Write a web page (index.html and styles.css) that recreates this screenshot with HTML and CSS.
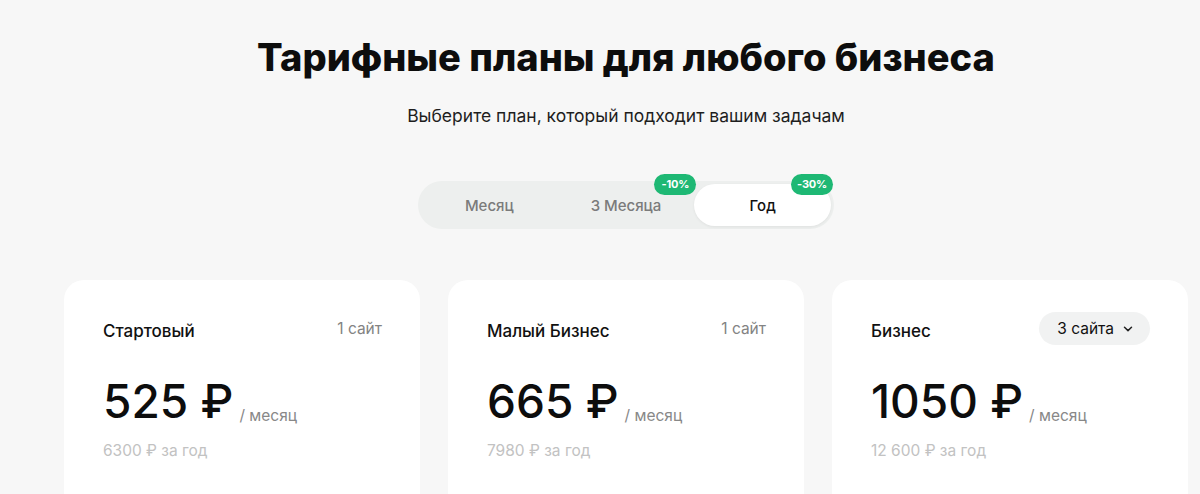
FILE: index.html
```html
<!DOCTYPE html>
<html lang="ru">
<head>
<meta charset="utf-8">
<title>Тарифные планы</title>
<link rel="stylesheet" href="styles.css">
</head>
<body>
<div class="page">
  <h1 class="title">Тарифные планы для любого бизнеса</h1>
  <p class="subtitle">Выберите план, который подходит вашим задачам</p>

  <div class="toggle">
    <div class="seg">Месяц</div>
    <div class="seg">3 Месяца<span class="badge">-10%</span></div>
    <div class="seg seg-active">Год<span class="badge">-30%</span></div>
  </div>

  <div class="cards">
    <div class="card">
      <div class="card-head">
        <span class="plan">Стартовый</span>
        <span class="sites">1 сайт</span>
      </div>
      <div class="price-row">
        <span class="price">525 ₽</span>
        <span class="per">/ месяц</span>
      </div>
      <div class="year">6300 ₽ за год</div>
    </div>
    <div class="card">
      <div class="card-head">
        <span class="plan">Малый Бизнес</span>
        <span class="sites">1 сайт</span>
      </div>
      <div class="price-row">
        <span class="price">665 ₽</span>
        <span class="per">/ месяц</span>
      </div>
      <div class="year">7980 ₽ за год</div>
    </div>
    <div class="card">
      <div class="card-head">
        <span class="plan">Бизнес</span>
        <span class="select">3 сайта
          <svg class="chev" width="10" height="6" viewBox="0 0 10 6"><path d="M1.5 1.2 L5 4.6 L8.5 1.2" fill="none" stroke="#222" stroke-width="1.5" stroke-linecap="round" stroke-linejoin="round"/></svg>
        </span>
      </div>
      <div class="price-row">
        <span class="price">1050 ₽</span>
        <span class="per">/ месяц</span>
      </div>
      <div class="year">12 600 ₽ за год</div>
    </div>
  </div>
</div>
</body>
</html>
```

FILE: styles.css
```css
* { box-sizing: border-box; }
html, body { margin: 0; padding: 0; }
body {
  background: #f7f7f7;
  font-family: "Inter", "Noto Sans", sans-serif;
  color: #111;
  overflow: hidden;
  height: 494px;
}
.page {
  width: 1252px;
  padding-top: 34px;
  display: flex;
  flex-direction: column;
  align-items: center;
}
.title {
  margin: 0;
  font-size: 38px;
  line-height: 46px;
  font-weight: 800;
  color: #0d0d0d;
  letter-spacing: 0;
}
.subtitle {
  margin: 24px 0 0;
  font-size: 17.5px;
  line-height: 24px;
  color: #1e1e1e;
}
.toggle {
  margin-top: 53px;
  width: 416px;
  height: 48px;
  padding: 3px;
  border-radius: 24px;
  background: #edefee;
  display: flex;
}
.seg {
  position: relative;
  flex: 1;
  display: flex;
  align-items: center;
  justify-content: center;
  border-radius: 21px;
  font-size: 15px;
  font-weight: 500;
  color: #7b7b7b;
}
.seg-active {
  background: #fff;
  color: #111;
  box-shadow: 0 1px 3px rgba(0,0,0,0.06);
}
.badge {
  position: absolute;
  top: -10px;
  right: -2px;
  width: 42px;
  height: 21px;
  border-radius: 11px;
  background: #1eb874;
  color: #fff;
  font-size: 11px;
  font-weight: 700;
  line-height: 21px;
  text-align: center;
  letter-spacing: -0.2px;
}
.cards {
  margin-top: 51px;
  width: 1124px;
  display: grid;
  grid-template-columns: repeat(3, 1fr);
  gap: 28px;
}
.card {
  background: #fff;
  border-radius: 20px;
  height: 260px;
  padding: 33px 38px 0 39px;
}
.card-head {
  height: 32px;
  display: flex;
  align-items: center;
  justify-content: space-between;
}
.plan {
  font-size: 17px;
  font-weight: 500;
  color: #111;
  padding-top: 4px;
}
.sites {
  font-size: 15.5px;
  color: #838383;
  padding-bottom: 2px;
}
.select {
  height: 33px;
  padding: 0 17px 0 18px;
  border-radius: 17px;
  background: #f1f2f2;
  display: flex;
  align-items: center;
  gap: 9px;
  font-size: 15.5px;
  color: #111;
  margin-top: -2px;
}
.chev { display: block; margin-top: 1px; }
.price-row {
  margin-top: 30px;
  display: flex;
  align-items: baseline;
  gap: 6px;
}
.price {
  font-size: 46px;
  line-height: 52px;
  font-weight: 500;
  color: #0d0d0d;
}
.per {
  font-size: 15.5px;
  color: #888;
  position: relative;
  top: 3px;
}
.year {
  margin-top: 14px;
  font-size: 15.5px;
  line-height: 20px;
  color: #c2c2c2;
}
```
